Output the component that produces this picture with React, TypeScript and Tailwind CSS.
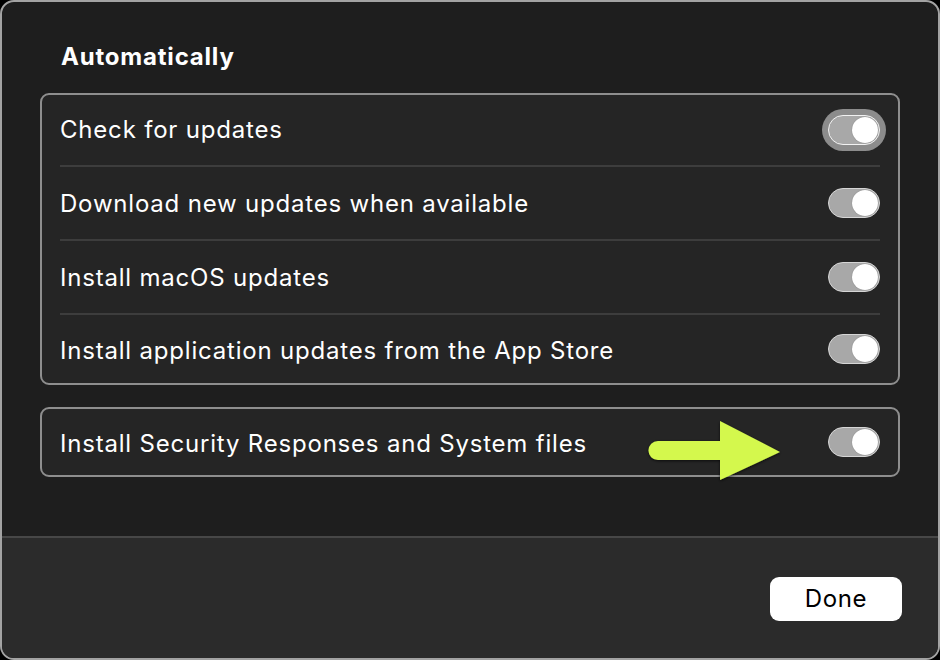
import React from 'react';

function Toggle({ focused = false }: { focused?: boolean }) {
  return (
    <div className={focused ? 'rounded-full p-[6px] bg-[#8c8c8c]' : 'p-[6px]'}>
      <div
        className={`w-[52px] h-[30px] rounded-full bg-[#a8a8a8] border-[1.5px] flex items-center justify-end pr-[1px] ${
          focused ? 'border-[#f2f2f2]' : 'border-[#d6d6d6]'
        }`}
      >
        <div className="w-[26px] h-[26px] rounded-full bg-white shadow-[0_0_1px_rgba(0,0,0,0.4)]" />
      </div>
    </div>
  );
}

function Row({ label, focused, divider, h, nudge = 'top-[1px]' }: { label: string; focused?: boolean; divider?: boolean; h: string; nudge?: string }) {
  return (
    <div className="px-[18px]">
      <div className={`${h} flex items-center justify-between ${divider ? 'border-b-2 border-[#3d3d3d]' : ''}`}>
        <span className={`relative ${nudge} text-[24px] tracking-[0.8px] text-white`}>{label}</span>
        <div className="-mr-[6px]">
          <Toggle focused={focused} />
        </div>
      </div>
    </div>
  );
}

export default function App() {
  return (
    <div className="w-[940px] h-[660px] bg-black" style={{ fontFamily: 'Inter, "Noto Sans", sans-serif' }}>
      <div className="w-full h-full rounded-[14px] border-2 border-[#a3a3a3] bg-[#1e1e1e] overflow-hidden flex flex-col">
        <div className="flex-1 px-[38px] pt-[40px] relative">
          <h2 className="text-[24px] tracking-[0.8px] font-bold text-white pl-[21px] leading-[30px]">Automatically</h2>
          <div className="mt-[21px] rounded-[9px] border-2 border-[#8e8e8e] bg-[#252525]">
            <Row label="Check for updates" focused divider h="h-[72px]" nudge="top-0" />
            <Row label="Download new updates when available" divider h="h-[74px]" />
            <Row label="Install macOS updates" divider h="h-[74px]" />
            <Row label="Install application updates from the App Store" h="h-[68px]" nudge="top-[2px]" />
          </div>
          <div className="mt-[22px] rounded-[9px] border-2 border-[#8e8e8e] bg-[#252525] h-[70px] px-[18px] flex items-center justify-between">
            <span className="relative top-[2px] text-[24px] tracking-[0.8px] text-white">Install Security Responses and System files</span>
            <div className="-mr-[6px]">
              <Toggle />
            </div>
          </div>
          <svg
            className="absolute left-[644px] top-[415px]"
            width="140"
            height="66"
            viewBox="0 0 140 66"
          >
            <defs>
              <filter id="sh" x="-20%" y="-20%" width="140%" height="140%">
                <feDropShadow dx="0" dy="1" stdDeviation="1.5" floodColor="#000" floodOpacity="0.7" />
              </filter>
            </defs>
            <path
              d="M12 24 H74 V4 L134 35 L74 63 V43 H12 A9.5 9.5 0 0 1 12 24 Z"
              fill="#d4f84e"
              filter="url(#sh)"
            />
          </svg>
        </div>
        <div className="h-[122px] border-t-2 border-[#474747] bg-[#2b2b2b] flex items-start justify-end pt-[39px] pr-[36px]">
          <button className="w-[132px] h-[44px] rounded-[9px] bg-white text-black text-[24px] tracking-[0.6px]">Done</button>
        </div>
      </div>
    </div>
  );
}
